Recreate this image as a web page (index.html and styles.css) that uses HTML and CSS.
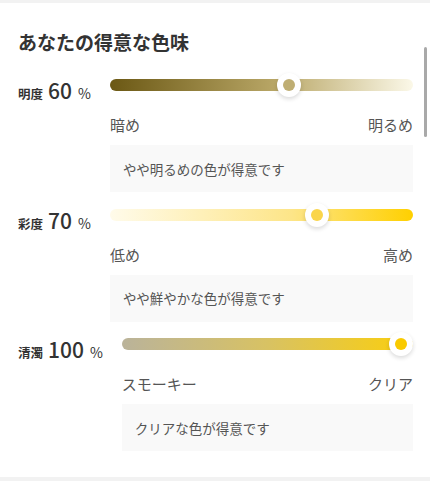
FILE: index.html
```html
<!DOCTYPE html>
<html lang="ja">
<head>
    <meta charset="UTF-8">
    <meta name="viewport" content="width=device-width, initial-scale=1.0">
    <title>あなたの得意な色味</title>
    <link rel="stylesheet" href="styles.css">
</head>
<body>
    <div class="card">
        <h2 class="card-title">あなたの得意な色味</h2>

        <div class="tone-row">
            <div class="tone-label">
                <span class="tone-name">明度</span>
                <span class="tone-value">60</span>
                <span class="tone-unit">%</span>
            </div>
            <div class="tone-body">
                <div class="slider">
                    <div class="track track-brightness"></div>
                    <div class="thumb" style="left: calc((100% - 24px) * 0.6);">
                        <span class="thumb-dot dot-brightness"></span>
                    </div>
                </div>
                <div class="slider-ends">
                    <span>暗め</span>
                    <span>明るめ</span>
                </div>
                <div class="tone-note">やや明るめの色が得意です</div>
            </div>
        </div>

        <div class="tone-row">
            <div class="tone-label">
                <span class="tone-name">彩度</span>
                <span class="tone-value">70</span>
                <span class="tone-unit">%</span>
            </div>
            <div class="tone-body">
                <div class="slider">
                    <div class="track track-saturation"></div>
                    <div class="thumb" style="left: calc((100% - 24px) * 0.7);">
                        <span class="thumb-dot dot-saturation"></span>
                    </div>
                </div>
                <div class="slider-ends">
                    <span>低め</span>
                    <span>高め</span>
                </div>
                <div class="tone-note">やや鮮やかな色が得意です</div>
            </div>
        </div>

        <div class="tone-row">
            <div class="tone-label">
                <span class="tone-name">清濁</span>
                <span class="tone-value">100</span>
                <span class="tone-unit">%</span>
            </div>
            <div class="tone-body">
                <div class="slider">
                    <div class="track track-clarity"></div>
                    <div class="thumb" style="left: calc((100% - 24px) * 1);">
                        <span class="thumb-dot dot-clarity"></span>
                    </div>
                </div>
                <div class="slider-ends">
                    <span>スモーキー</span>
                    <span>クリア</span>
                </div>
                <div class="tone-note">クリアな色が得意です</div>
            </div>
        </div>

        <div class="scrollbar"></div>
    </div>
</body>
</html>
```

FILE: styles.css
```css
* {
    margin: 0;
    padding: 0;
    box-sizing: border-box;
}

body {
    font-family: 'Noto Sans CJK JP', 'Noto Sans', sans-serif;
    background: #f2f2f2;
    color: #333;
    padding-top: 3px;
    height: 481px;
    overflow: hidden;
}

.card {
    position: relative;
    background: #fff;
    height: 474px;
    padding: 27px 17px 0 18px;
}

.card-title {
    font-size: 19px;
    line-height: 24px;
    font-weight: 700;
    color: #333;
    margin-bottom: 19px;
}

/* 各項目 */
.tone-row {
    display: flex;
    margin-bottom: 10.5px;
}

.tone-label {
    display: flex;
    align-items: baseline;
    white-space: nowrap;
    line-height: 1;
    padding-top: 7px;
    margin-right: 19px;
    color: #333;
}

.tone-name {
    font-size: 12.5px;
    font-weight: 700;
}

.tone-value {
    font-size: 21px;
    font-weight: 500;
    margin-left: 5px;
}

.tone-unit {
    font-size: 14px;
    margin-left: 6px;
}

.tone-body {
    flex: 1;
}

/* スライダー */
.slider {
    position: relative;
    height: 24px;
    display: flex;
    align-items: center;
}

.track {
    width: 100%;
    height: 12px;
    border-radius: 6px;
}

.track-brightness {
    background: linear-gradient(to right, #6b5814 0%, #b9a767 55%, #fbf8e8 100%);
}

.track-saturation {
    background: linear-gradient(to right, #fffbea 0%, #fde588 60%, #ffd000 100%);
}

.track-clarity {
    background: linear-gradient(to right, #bab39a 0%, #d8c263 50%, #fbcf0c 100%);
}

.thumb {
    position: absolute;
    top: 0;
    width: 24px;
    height: 24px;
    border-radius: 50%;
    background: #fff;
    box-shadow: 0 2px 4px rgba(0, 0, 0, 0.15);
    display: flex;
    align-items: center;
    justify-content: center;
}

.thumb-dot {
    width: 12px;
    height: 12px;
    border-radius: 50%;
}

.dot-brightness { background: #bfae73; }
.dot-saturation { background: #fad54b; }
.dot-clarity { background: #f9ca00; }

.slider-ends {
    display: flex;
    justify-content: space-between;
    font-size: 15px;
    line-height: 20px;
    color: #555;
    margin-top: 18px;
}

.tone-note {
    margin-top: 10px;
    height: 47px;
    background: #f9f9f9;
    font-size: 13.5px;
    color: #555;
    display: flex;
    align-items: center;
    padding-left: 13px;
}

.scrollbar {
    position: absolute;
    right: 3px;
    top: 44px;
    width: 3px;
    height: 90px;
    border-radius: 2px;
    background: #a9a9a9;
}
```
